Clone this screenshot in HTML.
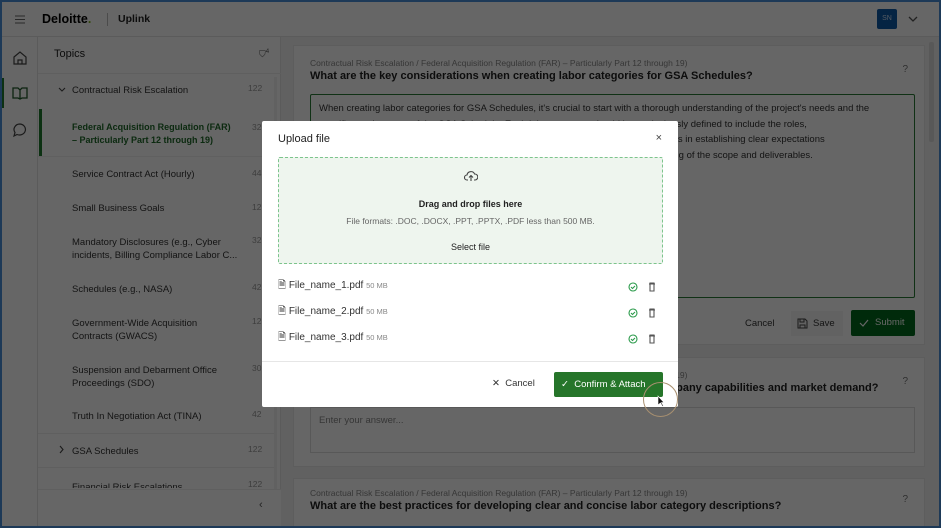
<!DOCTYPE html>
<html><head><meta charset="utf-8"><style>
*{box-sizing:border-box;margin:0;padding:0}
body{width:941px;height:528px;overflow:hidden;font-family:"Liberation Sans",sans-serif;background:#4a90d9;position:relative}
.app{position:absolute;left:2px;top:2px;width:937px;height:524px;background:#f2f2f2;overflow:hidden}
.hdr{position:absolute;left:0;top:0;width:937px;height:35px;background:#fff;border-bottom:1px solid #e4e4e4}
.rail{position:absolute;left:0;top:35px;width:36px;height:489px;background:#fff;border-right:1px solid #e4e4e4}
.topics{position:absolute;left:36px;top:35px;width:243px;height:489px;background:#fff;border-right:1px solid #e4e4e4}
.t{position:absolute;font-size:9.5px;color:#333;line-height:13px}
.n{position:absolute;font-size:8.5px;color:#999}
.card{position:absolute;left:291px;width:632px;background:#fff;border:1px solid #e8e8e8}
.crumb{position:absolute;left:16px;font-size:8.5px;color:#888}
.q{position:absolute;left:16px;font-size:11px;font-weight:bold;color:#222;white-space:nowrap}
.ov{position:absolute;left:0;top:0;width:941px;height:528px;background:rgba(0,0,0,0.6)}
.modal{position:absolute;left:262px;top:121px;width:416px;height:286px;background:#fff;border-radius:2px}
.file{position:absolute;left:16px;font-size:10px;color:#333}
.file small{font-size:7.5px;color:#888}
</style></head><body>
<div class="app">
 <div class="hdr">
  <svg style="position:absolute;left:13px;top:13px" width="10" height="9" stroke="#666" stroke-width="1"><path d="M0 1h10M0 4.5h10M0 8h10"/></svg>
  <div style="position:absolute;left:40px;top:10px;font-size:12.5px;font-weight:bold;color:#000">Deloitte<span style="color:#86bc25">.</span></div>
  <div style="position:absolute;left:105px;top:11px;width:1px;height:13px;background:#bbb"></div>
  <div style="position:absolute;left:116px;top:11px;font-size:10.5px;font-weight:bold;color:#222">Uplink</div>
  <div style="position:absolute;left:875px;top:7px;width:20px;height:20px;background:#0d5aa7;border-radius:2px;color:#cfe0f5;font-size:7px;text-align:center;line-height:20px">SN</div>
  <svg style="position:absolute;left:906px;top:13px" width="10" height="8"><path d="M1 2l4 4 4-4" stroke="#555" fill="none" stroke-width="1.3"/></svg>
 </div>
 <div class="rail">
  <svg style="position:absolute;left:10px;top:13px" width="16" height="16" fill="none" stroke="#444" stroke-width="1.2"><path d="M2 7l6-5 6 5v7H2z M6 14v-4h4v4"/></svg>
  <div style="position:absolute;left:0;top:41px;width:2px;height:30px;background:#1e7a2e"></div>
  <svg style="position:absolute;left:10px;top:49px" width="16" height="14" fill="none" stroke="#1e5a2a" stroke-width="1.3"><path d="M1 2h5l2 2 2-2h5v10H10l-2 1-2-1H1z M8 4v9"/></svg>
  <svg style="position:absolute;left:10px;top:85px" width="16" height="16" fill="none" stroke="#444" stroke-width="1.2"><path d="M8 2a6 5.5 0 1 1-3 10.5L2 14l1-3.5A6 5.5 0 0 1 8 2z"/></svg>
 </div>
 <div class="topics">
  <div style="position:absolute;left:16px;top:11px;font-size:11px;color:#222">Topics</div>
  <div style="position:absolute;left:221px;top:12px;font-size:9px;color:#555">⛉<sup style="font-size:6px">4</sup></div>
  <div style="position:absolute;left:0;top:36px;width:243px;height:1px;background:#eee"></div>
  <div style="position:absolute;left:236px;top:40px;width:3px;height:440px;background:#f2f2f2"></div>
  <svg style="position:absolute;left:20px;top:50px" width="8" height="6"><path d="M1 1l3 3 3-3" stroke="#444" fill="none" stroke-width="1.1"/></svg>
  <div class="t" style="left:34px;top:47px">Contractual Risk Escalation</div><div class="n" style="left:210px;top:46px">122</div>
  <div style="position:absolute;left:1px;top:72px;width:3px;height:47px;background:#1e7a2e"></div>
  <div class="t" style="left:34px;top:84px;color:#1e6a2a;font-weight:bold;font-size:9px">Federal Acquisition Regulation (FAR)<br>– Particularly Part 12 through 19)</div><div class="n" style="left:214px;top:85px">32</div>
  <div style="position:absolute;left:0;top:119px;width:236px;height:1px;background:#f0f0f0"></div>
  <div class="t" style="left:34px;top:131px">Service Contract Act (Hourly)</div><div class="n" style="left:214px;top:131px">44</div>
  <div class="t" style="left:34px;top:165px">Small Business Goals</div><div class="n" style="left:214px;top:165px">12</div>
  <div class="t" style="left:34px;top:199px">Mandatory Disclosures (e.g., Cyber<br>incidents, Billing Compliance Labor C...</div><div class="n" style="left:214px;top:198px">32</div>
  <div class="t" style="left:34px;top:246px">Schedules (e.g., NASA)</div><div class="n" style="left:214px;top:245px">42</div>
  <div class="t" style="left:34px;top:280px">Government-Wide Acquisition<br>Contracts (GWACS)</div><div class="n" style="left:214px;top:279px">12</div>
  <div class="t" style="left:34px;top:327px">Suspension and Debarment Office<br>Proceedings (SDO)</div><div class="n" style="left:214px;top:326px">30</div>
  <div class="t" style="left:34px;top:373px">Truth In Negotiation Act (TINA)</div><div class="n" style="left:214px;top:372px">42</div>
  <div style="position:absolute;left:0;top:396px;width:236px;height:1px;background:#eee"></div>
  <svg style="position:absolute;left:21px;top:408px" width="6" height="9"><path d="M1 1l3 3.5-3 3.5" stroke="#444" fill="none" stroke-width="1.1"/></svg>
  <div class="t" style="left:34px;top:408px">GSA Schedules</div><div class="n" style="left:210px;top:407px">122</div>
  <div style="position:absolute;left:0;top:430px;width:236px;height:1px;background:#eee"></div>
  <div class="t" style="left:34px;top:444px;height:7px;overflow:hidden">Financial Risk Escalations</div><div class="n" style="left:210px;top:442px">122</div>
  <div style="position:absolute;left:0;top:452px;width:243px;height:37px;background:#fff;border-top:1px solid #eee"></div>
  <div style="position:absolute;left:221px;top:462px;font-size:11px;color:#555">‹</div>
 </div>
 <div style="position:absolute;left:927px;top:40px;width:5px;height:100px;background:#ddd;border-radius:2px"></div>
 <div class="card" style="top:43px;height:300px">
  <div class="crumb" style="top:12px">Contractual Risk Escalation / Federal Acquisition Regulation (FAR) – Particularly Part 12 through 19)</div>
  <div class="q" style="top:24px">What are the key considerations when creating labor categories for GSA Schedules?</div>
  <div style="position:absolute;right:16px;top:18px;font-size:10px;color:#777">?</div>
  <div style="position:absolute;left:16px;top:48px;width:605px;height:204px;border:1px solid #2a7a36;border-radius:2px;padding:6px 8px;font-size:9.5px;line-height:15.7px;color:#333;white-space:nowrap;overflow:hidden">When creating labor categories for GSA Schedules, it's crucial to start with a thorough understanding of the project's needs and the<br>specific requirements of the GSA Schedule. Each labor category should be meticulously defined to include the roles,<br>responsibilities, qualifications, and experience levels required. This level of detail helps in establishing clear expectations<br>and ensures that both the contractor and the government have a mutual understanding of the scope and deliverables.</div>
  <div style="position:absolute;left:451px;top:272px;font-size:9.5px;color:#333">Cancel</div>
  <div style="position:absolute;left:497px;top:265px;width:52px;height:25px;background:#f6f6f6;font-size:9.5px;color:#333;line-height:25px;padding-left:22px">Save
   <svg style="position:absolute;left:6px;top:7px" width="11" height="11" fill="none" stroke="#444" stroke-width="1"><path d="M1 1h7l2 2v7H1z M3 1v3h4V1 M3 10V7h5v3"/></svg></div>
  <div style="position:absolute;left:557px;top:264px;width:64px;height:26px;background:#006a1c;border-radius:2px;color:#fff;font-size:9.5px;line-height:26px;padding-left:24px">Submit
   <svg style="position:absolute;left:8px;top:9px" width="10" height="8" fill="none" stroke="#fff" stroke-width="1.2"><path d="M1 4l3 3 5-6"/></svg></div>
 </div>
 <div class="card" style="top:355px;height:110px">
  <div class="crumb" style="top:12px">Contractual Risk Escalation / Federal Acquisition Regulation (FAR) – Particularly Part 12 through 19)</div>
  <div class="q" style="top:24px">How do you determine the appropriate labor categories based on company capabilities and market demand?</div>
  <div style="position:absolute;right:16px;top:18px;font-size:10px;color:#777">?</div>
  <div style="position:absolute;left:16px;top:49px;width:605px;height:46px;border:1px solid #ddd;font-size:9.5px;color:#888;padding:7px 8px">Enter your answer...</div>
 </div>
 <div class="card" style="top:476px;height:60px">
  <div class="crumb" style="top:9px">Contractual Risk Escalation / Federal Acquisition Regulation (FAR) – Particularly Part 12 through 19)</div>
  <div class="q" style="top:21px">What are the best practices for developing clear and concise labor category descriptions?</div>
  <div style="position:absolute;right:16px;top:15px;font-size:10px;color:#777">?</div>
 </div>
</div>
<div class="ov"></div>
<div class="modal">
 <div style="position:absolute;left:16px;top:12px;font-size:11px;color:#222">Upload file</div>
 <div style="position:absolute;right:16px;top:11px;font-size:11px;color:#444">×</div>
 <div style="position:absolute;left:16px;top:36px;width:385px;height:107px;background:#eef5ee;border:1px dashed #7cc48c;border-radius:2px">
  <svg style="position:absolute;left:185px;top:12px" width="14" height="12" fill="none" stroke="#444" stroke-width="1.1"><path d="M4 10H3a2.5 2.5 0 0 1 0-5 4 4 0 0 1 7.6-1A2.8 2.8 0 0 1 11 10h-1 M7 11V6 M5 7.5L7 5.5 9 7.5"/></svg>
  <div style="position:absolute;left:0;width:100%;top:41px;text-align:center;font-size:9px;font-weight:bold;color:#222">Drag and drop files here</div>
  <div style="position:absolute;left:0;width:100%;top:58px;text-align:center;font-size:8.5px;color:#666">File formats: .DOC, .DOCX, .PPT, .PPTX, .PDF less than 500 MB.</div>
  <div style="position:absolute;left:0;width:100%;top:84px;text-align:center;font-size:9px;color:#222">Select file</div>
 </div>
 <div class="file" style="top:157px">🗎 File_name_1.pdf <small>50 MB</small></div>
 <div class="file" style="top:183px">🗎 File_name_2.pdf <small>50 MB</small></div>
 <div class="file" style="top:209px">🗎 File_name_3.pdf <small>50 MB</small></div>
 <svg style="position:absolute;left:366px;top:161px" width="32" height="62" fill="none" stroke-width="1.1">
  <g stroke="#2a9a4a"><circle cx="5" cy="5" r="4"/><path d="M3 5l1.5 1.5L7 4"/><circle cx="5" cy="31" r="4"/><path d="M3 31l1.5 1.5L7 30"/><circle cx="5" cy="57" r="4"/><path d="M3 57l1.5 1.5L7 56"/></g>
  <g stroke="#555"><path d="M21 2h6M22 2v-1h4v1M22 2v7h4V2"/><path d="M21 28h6M22 28v-1h4v1M22 28v7h4v-7"/><path d="M21 54h6M22 54v-1h4v1M22 54v7h4v-7"/></g>
 </svg>
 <div style="position:absolute;left:0;top:240px;width:416px;height:1px;background:#e6e6e6"></div>
 <div style="position:absolute;left:230px;top:257px;font-size:9.5px;color:#333">✕&nbsp; Cancel</div>
 <div style="position:absolute;left:292px;top:251px;width:109px;height:25px;background:#26752a;border-radius:2px;color:#fff;font-size:9.5px;line-height:25px;padding-left:7px">✓&nbsp; Confirm &amp; Attach</div>
</div>
<div style="position:absolute;left:643px;top:382px;width:35px;height:35px;border:1px solid #a89070;border-radius:50%"></div>
<svg style="position:absolute;left:657px;top:395px" width="8" height="12"><path d="M1 1v9l2.5-2 2 3.5 1-.5-2-3.5H7z" fill="#111" stroke="#fff" stroke-width=".6"/></svg>
</body></html>
